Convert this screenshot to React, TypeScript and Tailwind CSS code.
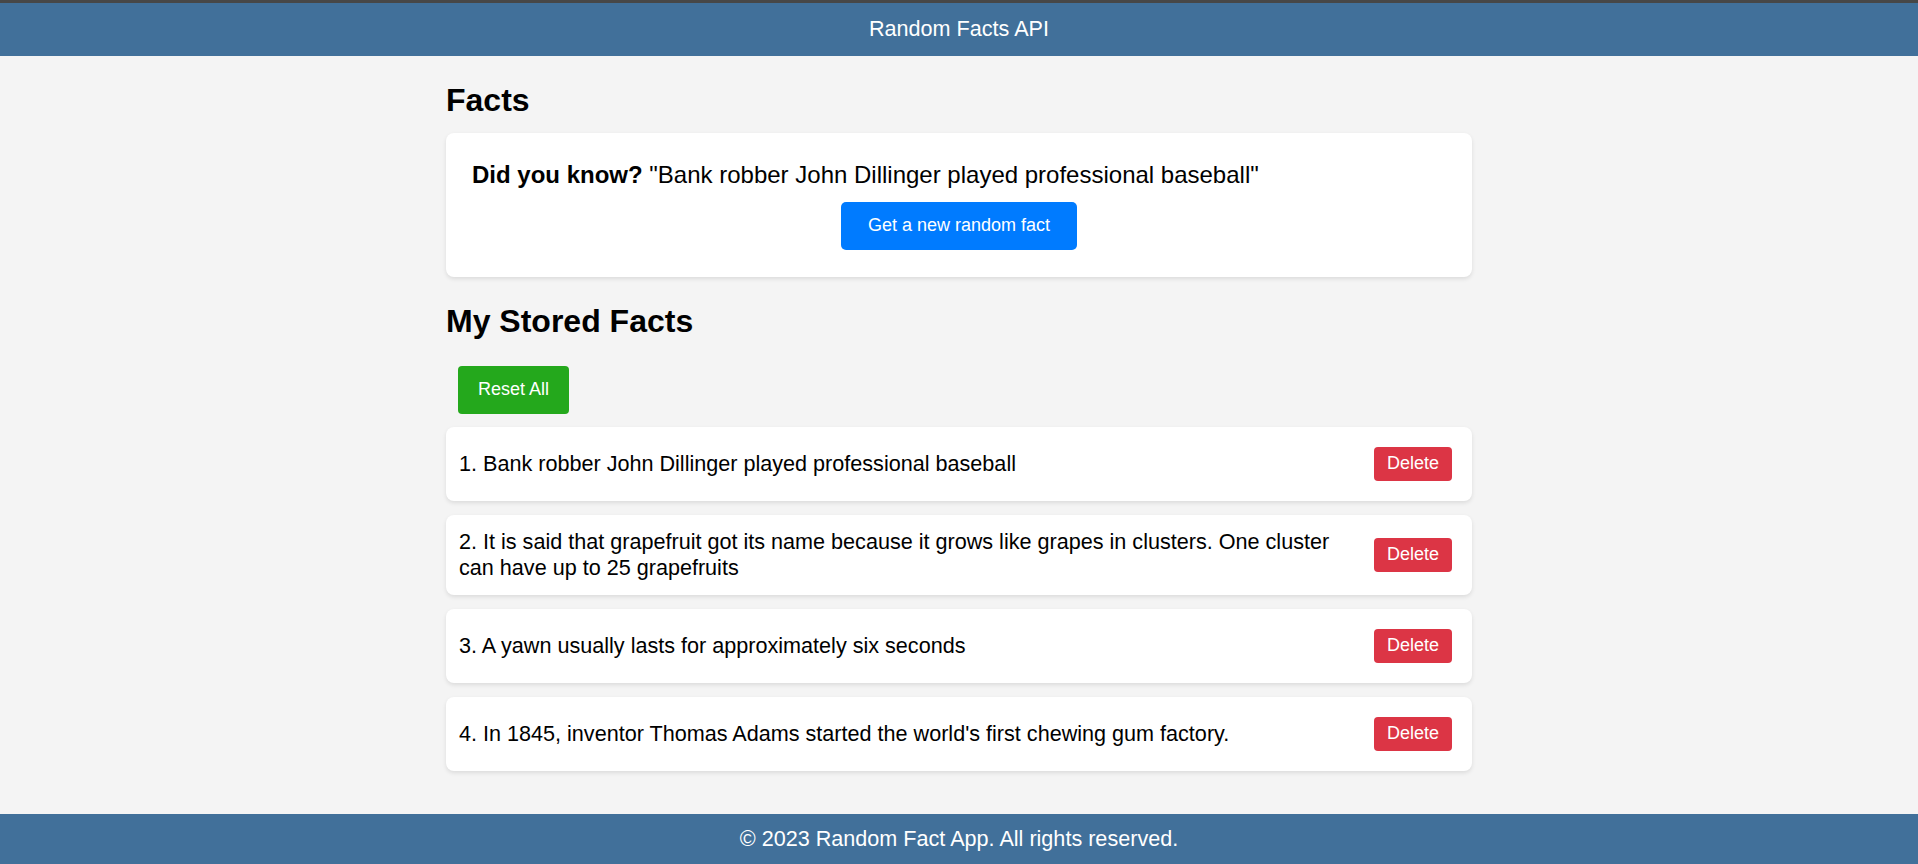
import { useState } from "react";

const initialFacts = [
  "Bank robber John Dillinger played professional baseball",
  "It is said that grapefruit got its name because it grows like grapes in clusters. One cluster can have up to 25 grapefruits",
  "A yawn usually lasts for approximately six seconds",
  "In 1845, inventor Thomas Adams started the world's first chewing gum factory.",
];

function Header() {
  return (
    <header className="h-[56px] border-t-[3px] border-[#474747] bg-[#41709a] flex items-center justify-center">
      <span className="text-white text-[21.6px]">Random Facts API</span>
    </header>
  );
}

function Footer() {
  return (
    <footer className="h-[50px] bg-[#41709a] flex items-center justify-center">
      <span className="text-white text-[21.6px]">© 2023 Random Fact App. All rights reserved.</span>
    </footer>
  );
}

export default function App() {
  const [facts, setFacts] = useState(initialFacts);
  const current = initialFacts[0];

  return (
    <div
      className="min-h-screen flex flex-col bg-[#f4f4f4] text-black"
      style={{ fontFamily: '"Liberation Sans", Arial, sans-serif' }}
    >
      <Header />
      <main className="flex-1 w-[1026px] mx-auto">
        <h1 className="mt-[26px] text-[32px] font-bold leading-[37px]">Facts</h1>
        <div className="mt-[14px] bg-white rounded-[8px] shadow-[0_2px_4px_rgba(0,0,0,0.1)] pt-[28px] pb-[27px] px-[26px]">
          <p className="text-[24px] leading-[27.6px]">
            <span className="font-bold">Did you know?</span> {`"${current}"`}
          </p>
          <div className="mt-[13px] flex justify-center">
            <button className="h-[48px] px-[27px] rounded-[5px] bg-[#007bff] text-white text-[18px]">
              Get a new random fact
            </button>
          </div>
        </div>

        <h2 className="mt-[26px] text-[32px] font-bold leading-[37px]">My Stored Facts</h2>
        <button
          onClick={() => setFacts([])}
          className="block mt-[26px] ml-[12px] h-[48px] px-[20px] rounded-[4px] bg-[#24a81c] text-white text-[18px]"
        >
          Reset All
        </button>

        <ul className="mt-[13px] flex flex-col gap-[14px]">
          {facts.map((fact, i) => (
            <li
              key={fact}
              className="flex items-center justify-between gap-[20px] bg-white rounded-[8px] shadow-[0_2px_4px_rgba(0,0,0,0.1)] pl-[13px] pr-[20px] py-[14px]"
            >
              <span className="text-[21.6px] leading-[26px]">{`${i + 1}. ${fact}`}</span>
              <button
                onClick={() => setFacts(facts.filter((f) => f !== fact))}
                className="shrink-0 my-[6px] h-[34px] px-[13px] rounded-[4px] bg-[#dc3545] text-white text-[18px]"
              >
                Delete
              </button>
            </li>
          ))}
        </ul>
      </main>
      <Footer />
    </div>
  );
}
